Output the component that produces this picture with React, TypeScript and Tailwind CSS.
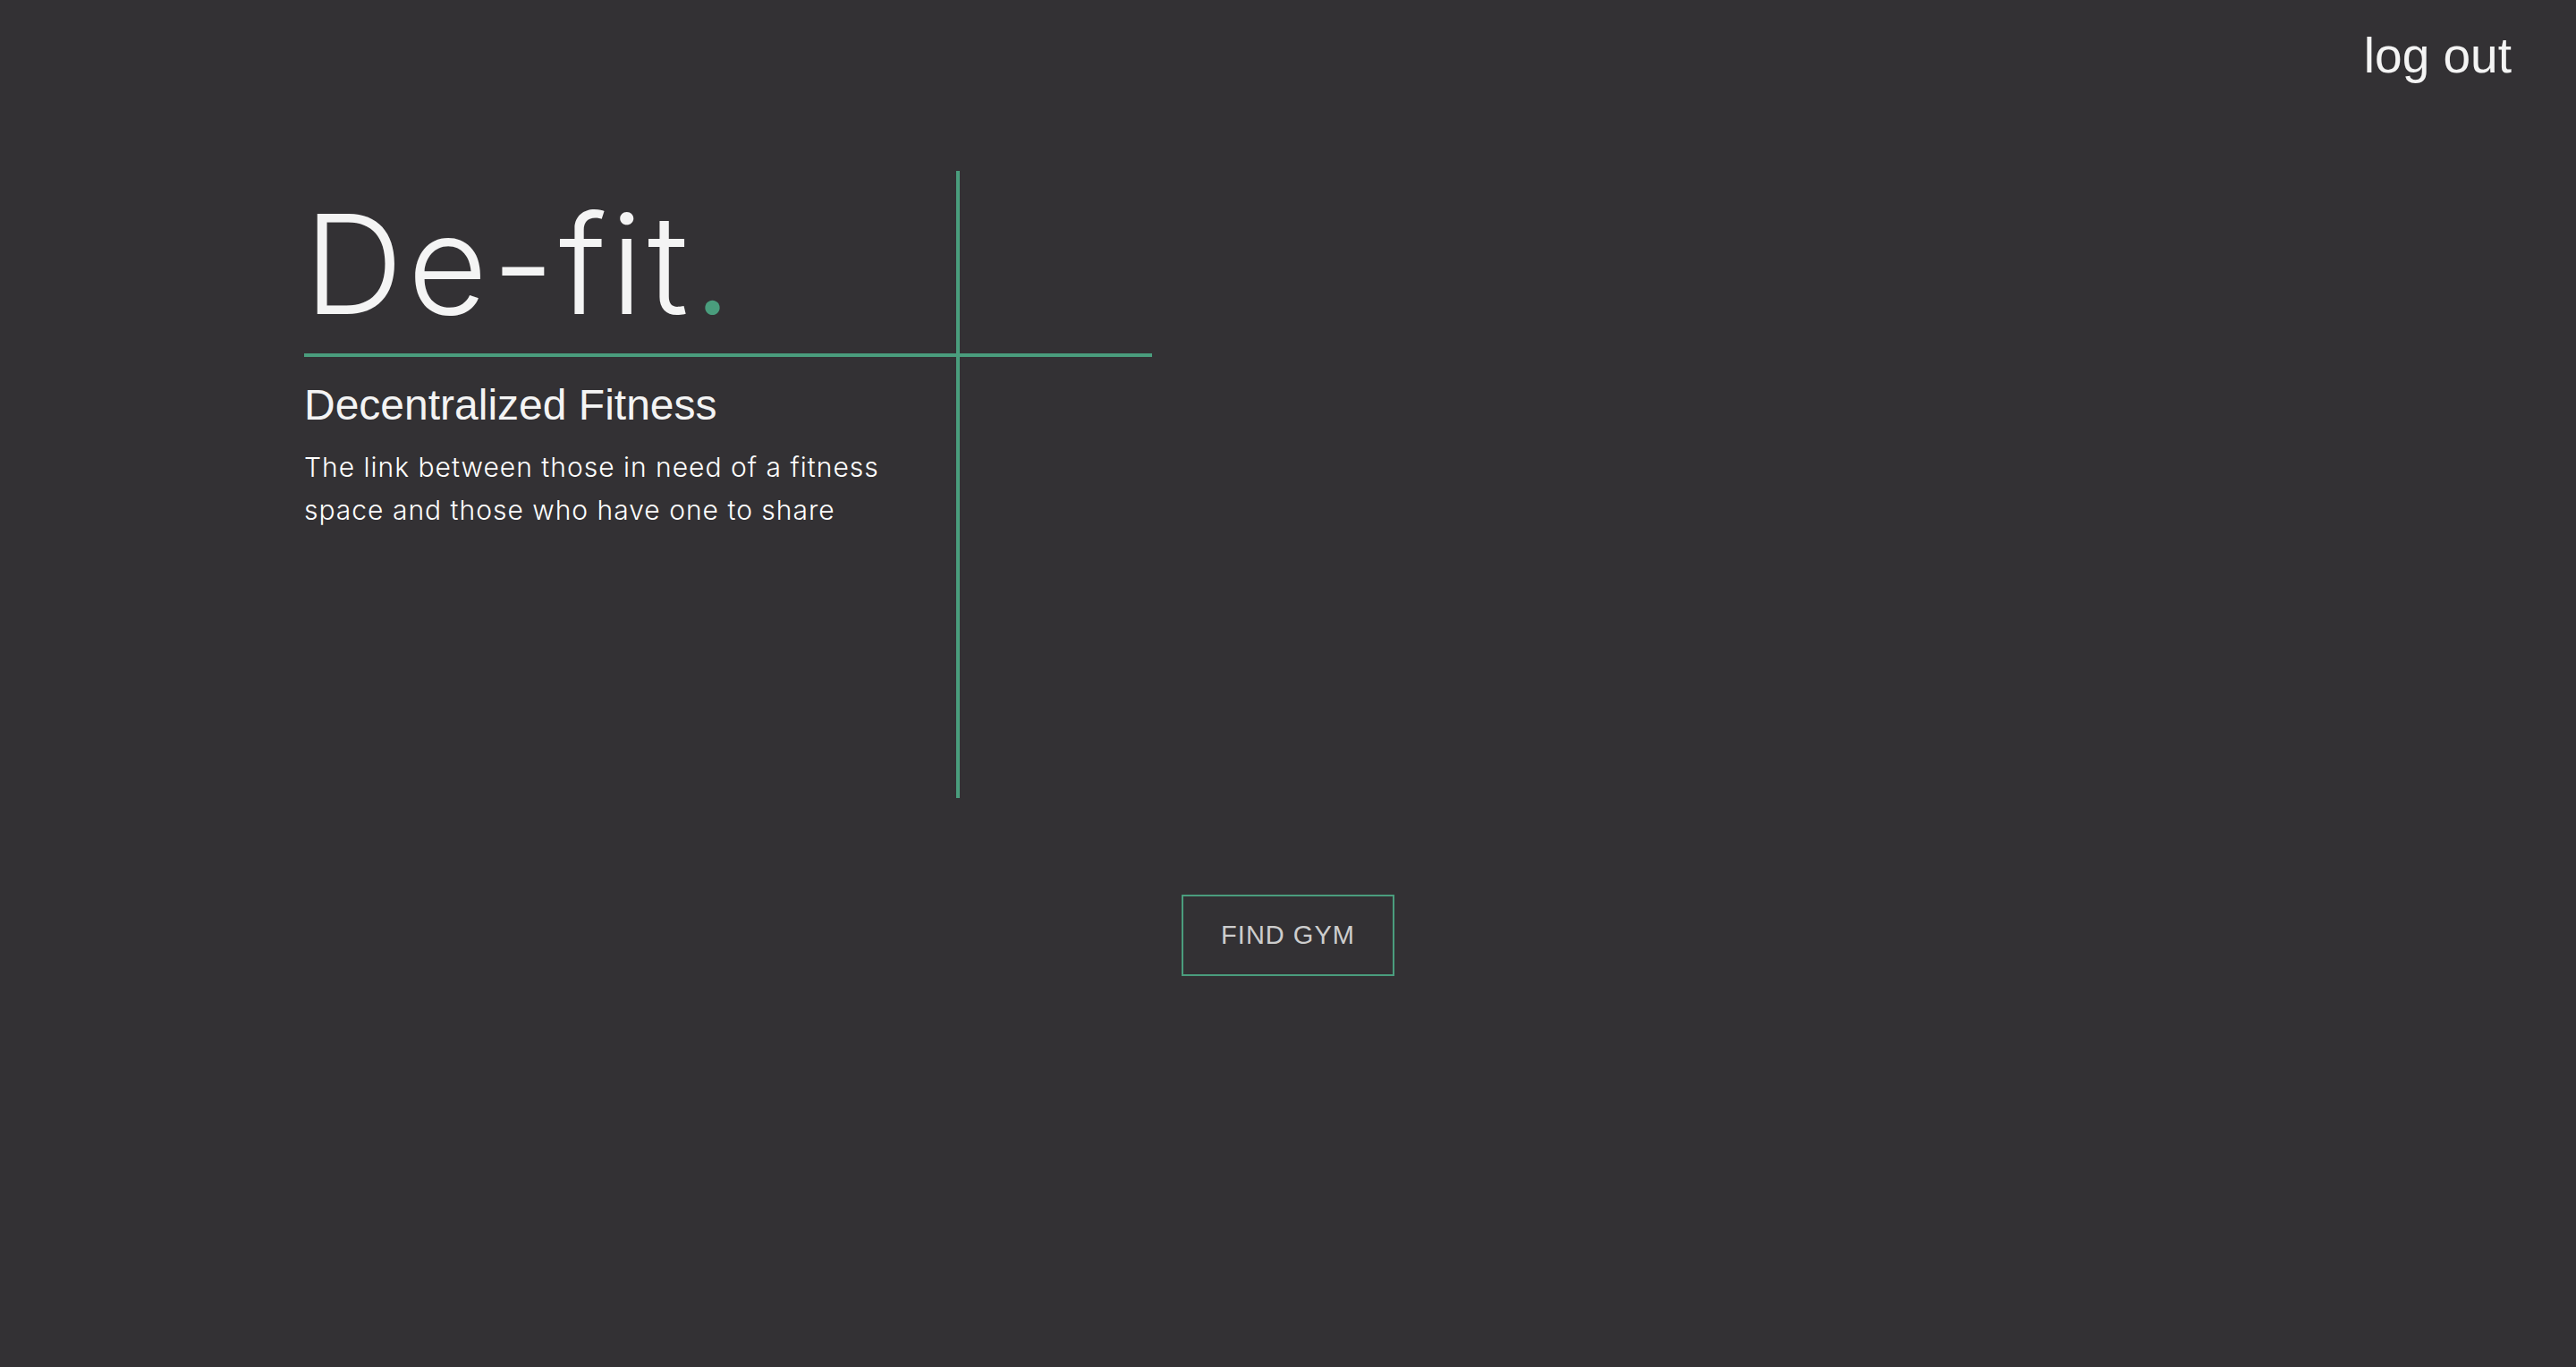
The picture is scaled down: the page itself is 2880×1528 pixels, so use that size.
export default function App() {
  return (
    <div className="flex h-[1528px] w-full flex-col bg-[#333134] text-[#f4f4f4]">
      <header className="flex h-[191px] items-start justify-end pr-[72px] pt-[35px]">
        <button className="font-['Liberation_Sans',Arial,sans-serif] text-[55px] leading-none">
          log out
        </button>
      </header>

      <main className="pl-[340px]">
        <section className="flex h-[701px] w-[733px] flex-col border-r-4 border-[#4a9d7d]">
          <h1 className="mt-[27px] font-['Inter',sans-serif] text-[154px] font-light leading-none tracking-[5px]">
            De-fit<span className="text-[#4a9d7d]">.</span>
          </h1>
          <div className="mt-[23px] h-1 w-[948px] shrink-0 bg-[#4a9d7d]" />
          <h2 className="mt-[30px] font-['Liberation_Sans',Arial,sans-serif] text-[48px] leading-none">
            Decentralized Fitness
          </h2>
          <p className="mt-[21px] w-[690px] font-['Inter',sans-serif] text-[30px] font-light leading-[48px] tracking-[1px] text-white">
            The link between those in need of a fitness space and those who
            have one to share
          </p>
        </section>
      </main>

      <div className="mt-[108px] flex justify-center">
        <button className="flex h-[91px] w-[238px] items-center justify-center border-2 border-[#4a9d7d] font-['Liberation_Sans',Arial,sans-serif] text-[29px] tracking-[1px] text-[#cdcdcd]">
          FIND GYM
        </button>
      </div>
    </div>
  );
}
